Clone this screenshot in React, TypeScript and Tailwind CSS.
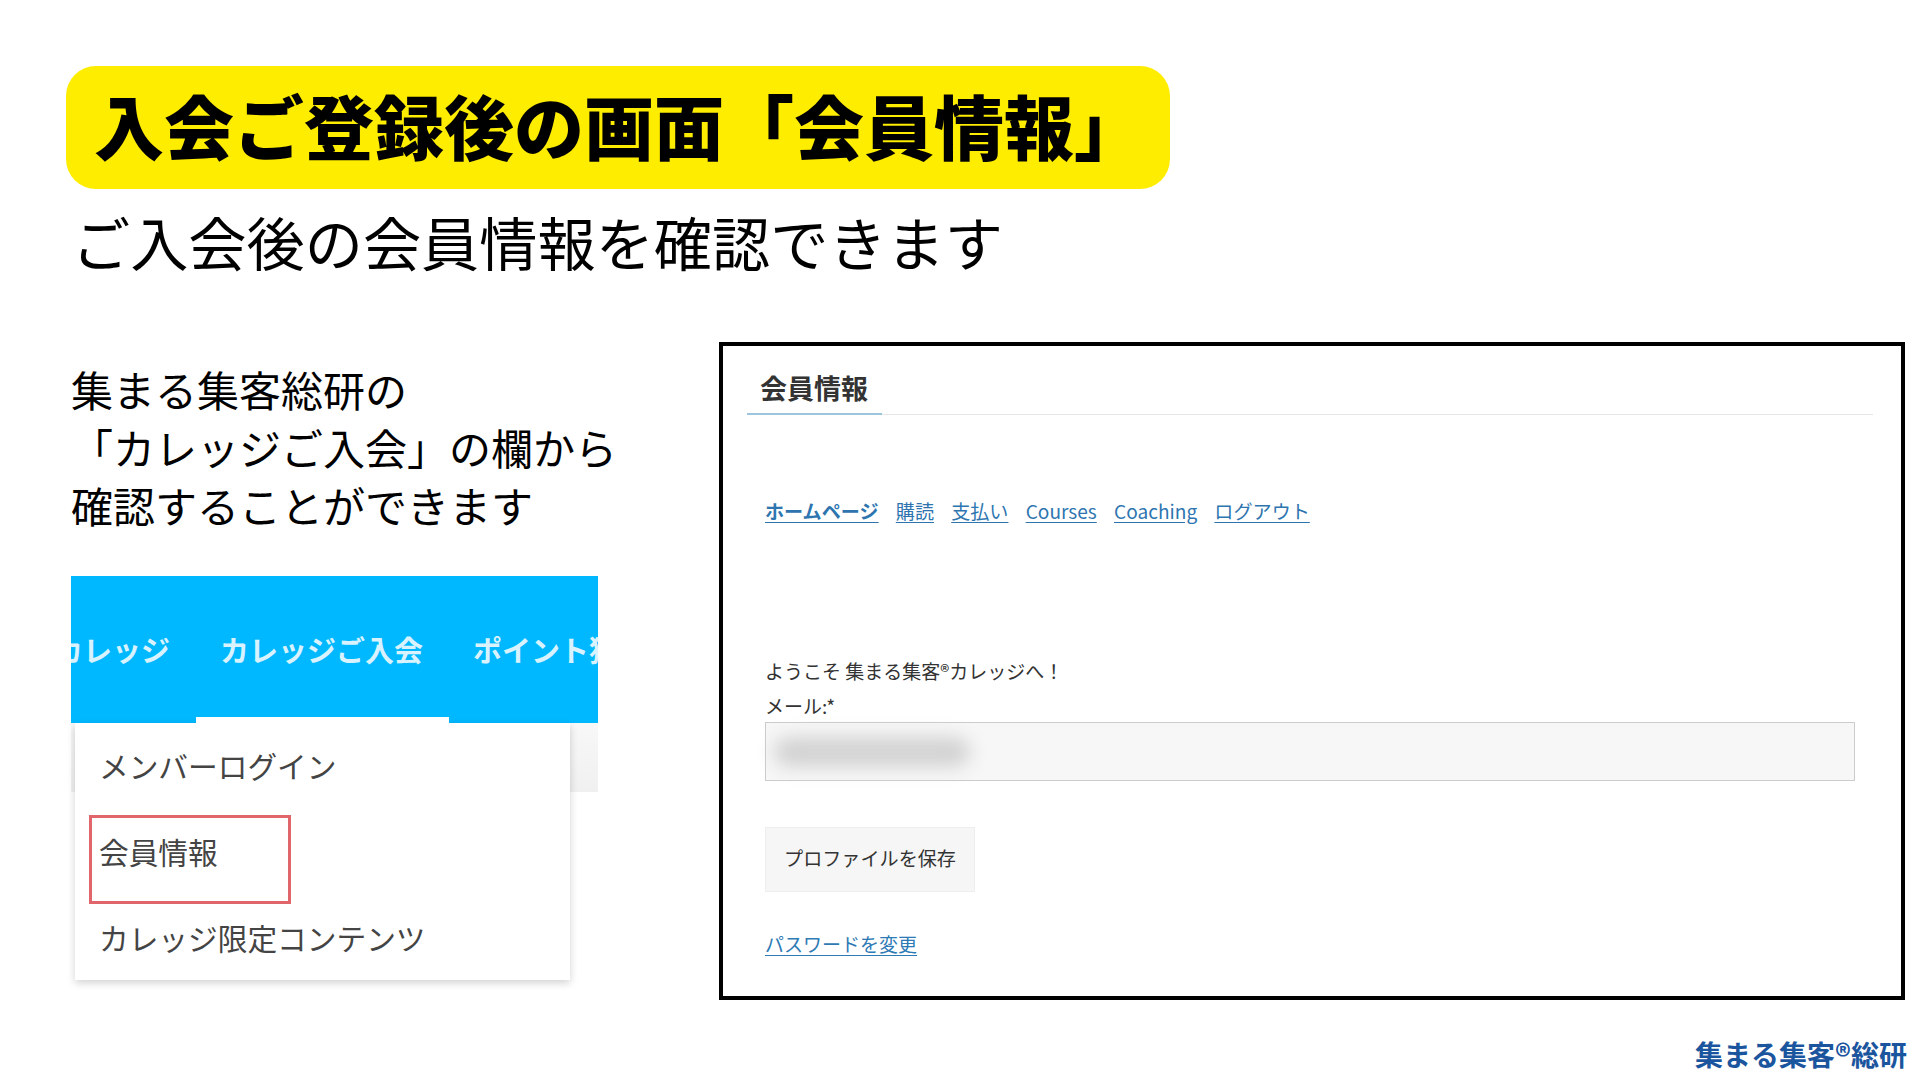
import React from "react";

const links = [
    { label: "ホームページ", bold: true },
    { label: "購読" },
    { label: "支払い" },
    { label: "Courses" },
    { label: "Coaching" },
    { label: "ログアウト" },
];

// Screenshot of the site's nav with the open dropdown
const NavCapture = () => {
    return (
        <div className="relative mt-[42px] w-[527px] h-[404px]">
            <div className="h-[147px] bg-[#00b8ff] overflow-hidden pt-[52px]">
                <div className="flex gap-[50px] -ml-[17px] whitespace-nowrap text-[29px] leading-[42px] font-bold text-[#d8f2ff]">
                    <span>カレッジ</span>
                    <span>カレッジご入会</span>
                    <span>ポイント獲得</span>
                </div>
            </div>
            <div className="h-[69px] bg-gradient-to-b from-[#f8f8f8] to-[#f0f0f0]"></div>

            {/* Dropdown lying over the nav */}
            <div className="absolute left-[4px] top-[147px] w-[495px] h-[257px] bg-white shadow-[0_3px_8px_rgba(0,0,0,0.18)] pl-[24px] text-[29.7px] text-[#444444]">
                <div className="absolute left-[121px] -top-[6px] w-[253px] h-[6px] bg-white"></div>
                <div className="flex items-center h-[86px]">メンバーログイン</div>
                <div className="flex items-center h-[86px]">会員情報</div>
                <div className="flex items-center h-[86px]">カレッジ限定コンテンツ</div>
                <div className="absolute left-[14px] top-[92px] w-[202px] h-[89px] border-[3px] border-[#e0666c]"></div>
            </div>
        </div>
    );
};

// Screenshot of the member page in the black frame
const MemberPanel = () => {
    return (
        <div className="w-[1186px] h-[658px] border-4 border-black">
            <div className="ml-[24px] w-[1126px] h-[69px] pt-[22px] border-b border-[#e6e6e6]">
                <div className="w-[135px] h-[47px] border-b-2 border-[#9cc6dc] pl-[13px] text-[27px] leading-[40px] font-bold text-[#333333]">
                    会員情報
                </div>
            </div>

            <div className="pl-[42px]">
                <div className="flex gap-[17.2px] mt-[80px] text-[19.1px] leading-[32px] text-[#2e75b0] underline underline-offset-[3px]">
                    {links.map((link) => (
                        <span key={link.label} className={link.bold ? "font-bold" : ""}>
                            {link.label}
                        </span>
                    ))}
                </div>

                <div className="mt-[126px] text-[19px] leading-[35px] text-[#333333]">
                    <div>ようこそ 集まる集客®カレッジへ！</div>
                    <div>メール:*</div>
                </div>

                <div className="relative w-[1090px] h-[59px] mt-[-1px] bg-[#f7f7f7] border border-[#cccccc]">
                    <div className="absolute left-[8px] top-[14px] w-[196px] h-[30px] rounded-full bg-[#d2d2d2] blur-[9px]"></div>
                </div>

                <div className="flex items-center justify-center w-[210px] h-[65px] mt-[46px] pb-[2px] bg-[#f6f6f6] border border-[#eeeeee] text-[19.1px] text-[#333333]">
                    プロファイルを保存
                </div>

                <div className="mt-[36px] text-[19px] leading-[32px] text-[#2e7ab5] underline underline-offset-[3px]">
                    パスワードを変更
                </div>
            </div>
        </div>
    );
};

export default function App() {
    return (
        <div className="w-[1920px] h-[1080px] bg-white overflow-hidden pt-[66px] font-['Noto_Sans_CJK_JP',sans-serif] text-black">
            <div className="ml-[66px] flex items-center w-[1104px] h-[123px] rounded-[30px] bg-[#ffed00] pl-[28px] pb-[7px] text-[70px] font-black whitespace-nowrap">
                入会ご登録後の画面「会員情報」
            </div>

            <div className="ml-[72px] mt-[17px] text-[58.2px] leading-[70px] whitespace-nowrap">
                ご入会後の会員情報を確認できます
            </div>

            <div className="flex mt-[66px] pl-[71px]">
                <div className="w-[648px] pt-[18px]">
                    <div className="text-[42px] leading-[58px] whitespace-nowrap">
                        <div>集まる集客総研の</div>
                        <div>「カレッジご入会」の欄から</div>
                        <div>確認することができます</div>
                    </div>
                    <NavCapture />
                </div>
                <MemberPanel />
            </div>

            <div className="flex justify-end mt-[34px] pr-[13px] text-[28px] leading-[40px] font-bold text-[#1a559e] whitespace-nowrap">
                集まる集客<span className="text-[31px]">®</span>総研
            </div>
        </div>
    );
}
